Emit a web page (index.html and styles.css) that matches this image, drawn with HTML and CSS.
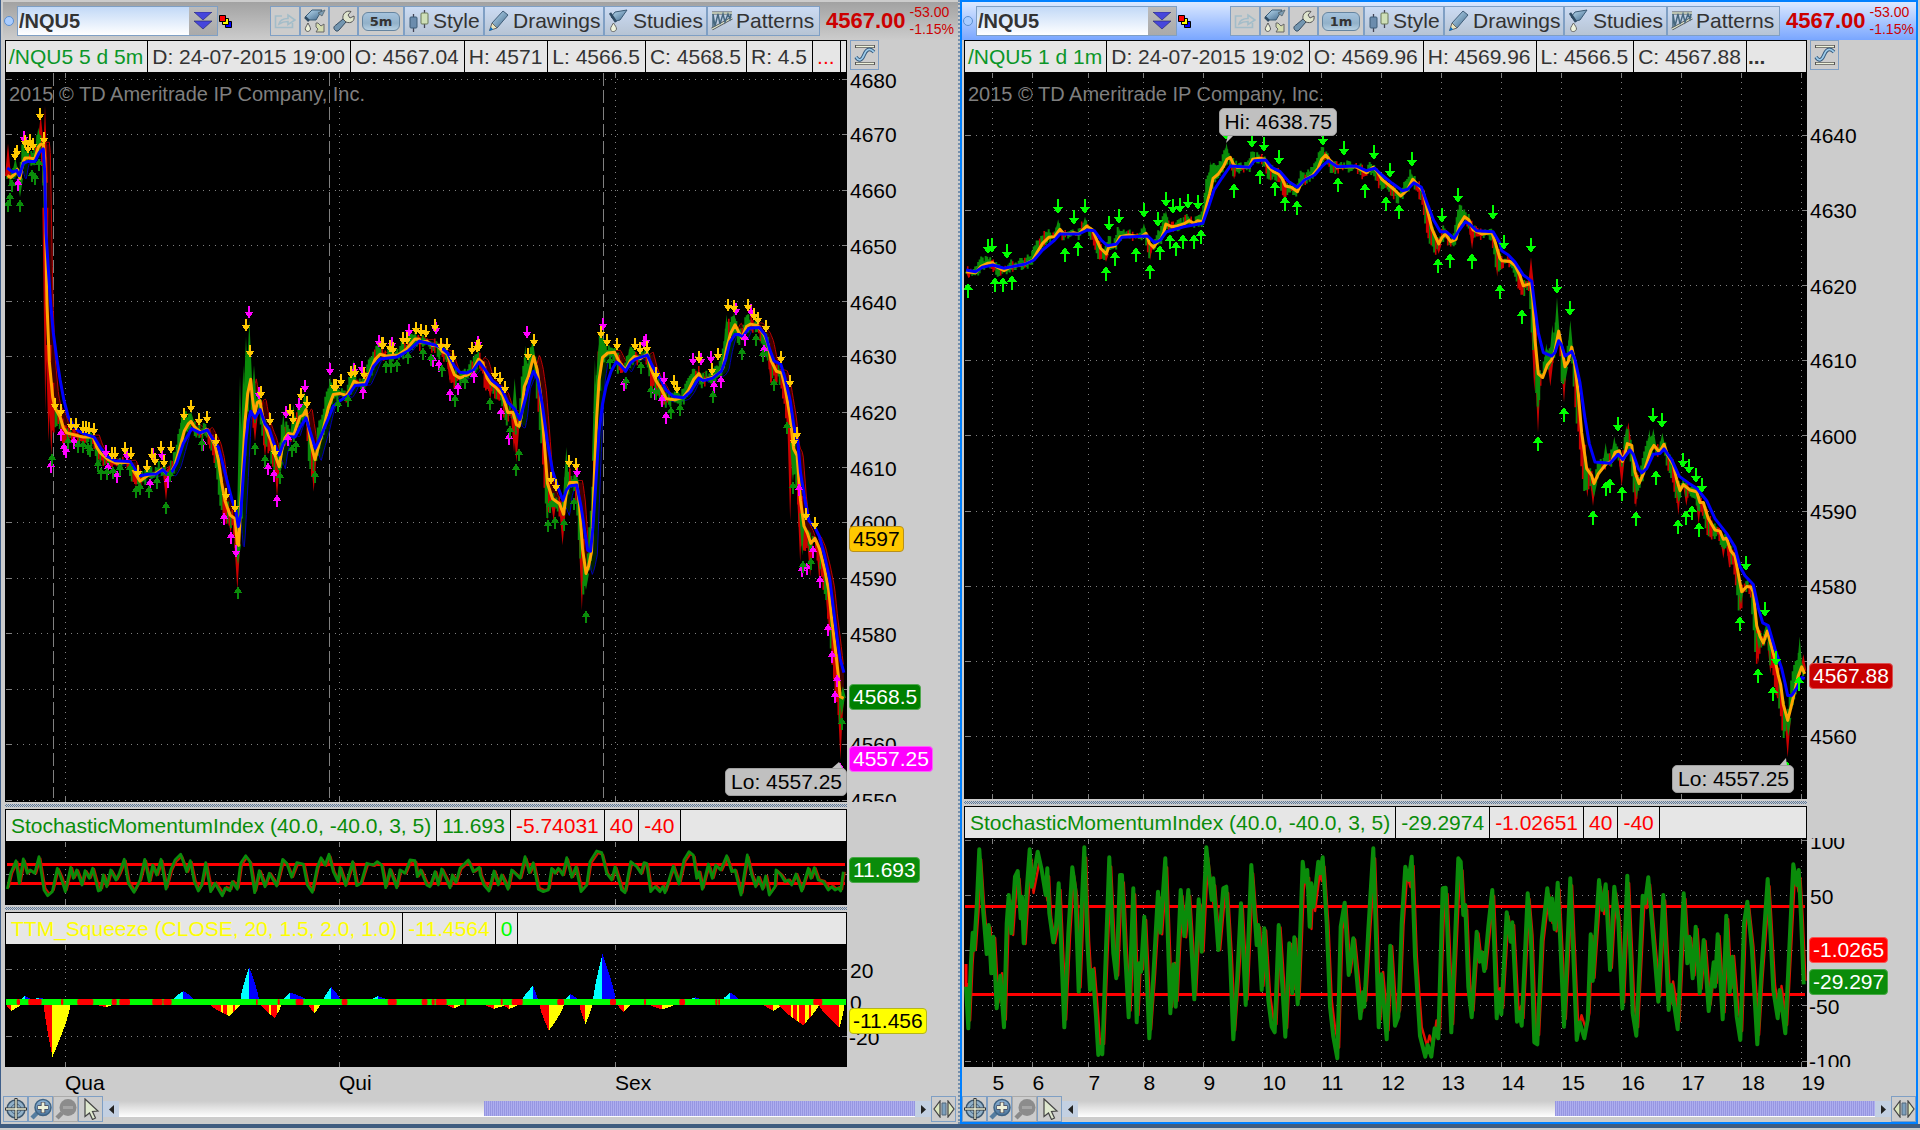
FILE: index.html
```html
<!DOCTYPE html>
<html lang="en">
<head>
<meta charset="utf-8">
<title>/NQU5 charts</title>
<link rel="stylesheet" href="styles.css">
</head>
<body>
<svg class="defs" aria-hidden="true">
  <defs>
    <linearGradient id="steel" x1="0" y1="0" x2="1" y2="1"><stop offset="0" stop-color="#bfe0f5"/><stop offset="1" stop-color="#3f678a"/></linearGradient>
    <linearGradient id="lens" x1="0" y1="0" x2="0" y2="1"><stop offset="0" stop-color="#8fb4d6"/><stop offset="1" stop-color="#4a7399"/></linearGradient>
  </defs>
  <symbol id="i-share" viewBox="0 0 22 16"><path d="M8 3H1.500V14.500H18.500V10M5 11C6 7 9 5.500 14 5.500V2L21 7L14 11.500V8.500C10 8.500 8 9 5 11Z" fill="none" stroke="#a3bdc9" stroke-width="1.600"/></symbol>
  <symbol id="i-reset" viewBox="0 0 22 24"><path d="M1 8L8 1L18 1L12 11L5 11Z" fill="url(#steel)" stroke="#3a5a74"/><path d="M1 8L5 12" stroke="#2f4b63" stroke-width="2.500"/><path d="M14 4L21 1L18 7Z" fill="#7f9db3" stroke="#52656f" stroke-width="0.800"/><path d="M4 14C2 18 .8 19 1.500 21C3 23.500 6 22.500 6.500 20C6.500 18 5 16.500 4 14Z" fill="#eef3dc" stroke="#555"/><path d="M12 14H14L17 17L20 15V23H12L14 20L12 18Z" fill="#d5dcae" stroke="#666"/></symbol>
  <symbol id="i-wrench" viewBox="0 0 22 22"><path d="M2 20C0 18 1 16 3 15L10 9L13 12L6 20C5 21.500 3 21.500 2 20Z" fill="#7396b0" stroke="#334b60"/><path d="M10 9C9 4 13 0 18 1.500L15 5L17 8L21 6C22 11 18 14 13 12Z" fill="#dfe5cd" stroke="#555"/></symbol>
  <symbol id="i-candles" viewBox="0 0 22 22"><path d="M5.500 4V22M16.500 0V18" stroke="#445" stroke-width="1.300"/><rect x="2" y="7" width="7" height="11" rx="1" fill="#6b8cad" stroke="#3f5c78"/><rect x="13" y="3" width="7" height="11" rx="1" fill="#cfe0b8" stroke="#6b7b5a"/></symbol>
  <symbol id="i-pencil" viewBox="0 0 22 22"><path d="M4 13L15 1L20 5L9 18Z" fill="url(#steel)" stroke="#3f5c78"/><path d="M4 13L9 18L1.500 20.500Z" fill="#ece6bd" stroke="#666"/><path d="M1 21L3 17L5 19.500Z" fill="#0870c8"/></symbol>
  <symbol id="i-drop" viewBox="0 0 22 24"><path d="M3 8L7 3L19 1L12 11L8 12Z" fill="url(#steel)" stroke="#3a5a74"/><path d="M2 4L8 13" stroke="#2f4b63" stroke-width="2.600"/><path d="M5.500 14C3 18 2 19 3 21.500C4.500 23.500 8 22.500 8.500 20C8.500 18 7 16.500 5.500 14Z" fill="#eef3dc" stroke="#666"/></symbol>
  <symbol id="i-pattern" viewBox="0 0 22 20"><path d="M1 2H21M1 18L21 7" stroke="#555" stroke-width="3"/><path d="M1 2H21M1 18L21 7" stroke="#dce8d0" stroke-width="1.400"/><path d="M2 3L4 15L7 3L9 13L12 3L14 11L17 3L19 8L20 3M2 3V16" fill="none" stroke="#47687f" stroke-width="1.500"/></symbol>
  <symbol id="i-curve" viewBox="0 0 22 22"><path d="M1 2.500H21M1 19.500H21" stroke="#555" stroke-width="3"/><path d="M2 2.500H20M2 19.500H20" stroke="#eef3dc" stroke-width="1.400"/><path d="M2 13C5 18 8 16 10 11S15 3 20 8" fill="none" stroke="#36597a" stroke-width="3.600"/><path d="M2 13C5 18 8 16 10 11S15 3 20 8" fill="none" stroke="#9ccbea" stroke-width="1.800"/></symbol>
  <symbol id="i-cross" viewBox="0 0 22 22"><circle cx="11" cy="11" r="9" fill="#91b0c8" stroke="#3e5870" stroke-width="1.500"/><circle cx="11" cy="11" r="5" fill="none" stroke="#4c6c88"/><path d="M11 0V22M0 11H22" stroke="#333" stroke-width="3"/><path d="M11 1V21M1 11H21" stroke="#e9eed8" stroke-width="1.400"/></symbol>
  <symbol id="i-plus" viewBox="0 0 22 22"><path d="M2 20L7 15" stroke="#557da0" stroke-width="4.500"/><circle cx="13" cy="9.500" r="8" fill="url(#lens)" stroke="#3e6384" stroke-width="1.500"/><path d="M13 4V15M7.500 9.500H18.500" stroke="#445" stroke-width="4.500"/><path d="M13 4.500V14.500M8 9.500H18" stroke="#edf0d8" stroke-width="2.800"/></symbol>
  <symbol id="i-minus" viewBox="0 0 22 22"><path d="M2 20L7 15" stroke="#8a8a8a" stroke-width="4.500"/><circle cx="13" cy="9.500" r="8.500" fill="#8c8c8c"/><path d="M8 9.500H18" stroke="#a5a5a5" stroke-width="3"/></symbol>
  <symbol id="i-cursor" viewBox="0 0 22 22"><path d="M5 1L18 13L12.500 13.500L15.500 20L12.500 21.500L9.500 15L5 18.500Z" fill="#dfe8cf" stroke="#444" stroke-width="1.200"/></symbol>
  <symbol id="i-expand" viewBox="0 0 22 18"><path d="M7 1V17L1 9Z M15 1V17L21 9Z" fill="#dce8c0" stroke="#444" stroke-width="1.200"/><path d="M9 3V15H13V3Z" fill="#7ea0bd" stroke="#52697d"/></symbol>
  <symbol id="i-down" viewBox="0 0 18 18"><path d="M0 0H18L9 8ZM0 9H18L9 17Z" fill="#4646dc" stroke="#222266" stroke-width="0.600"/></symbol>
  <symbol id="i-link" viewBox="0 0 13 13"><path d="M6.500 6.500H12.500V12.500H6.500Z" fill="#00f" stroke="#000"/><path d="M3.500 3.500H9.500V9.500H3.500Z" fill="#ff0" stroke="#000"/><path d="M.5 .5H6.500V6.500H.5Z" fill="#f00" stroke="#000"/></symbol>
  <symbol id="i-prev" viewBox="0 0 5 9"><path d="M5 0V9L0 4.500Z" fill="#222"/></symbol>
  <symbol id="i-next" viewBox="0 0 5 9"><path d="M0 0V9L5 4.500Z" fill="#222"/></symbol>
</svg>

<main class="workspace">
  <section class="panel panel-left" aria-label="Five minute chart">
    <header class="toolbar">
      <span class="dot"></span>
      <div class="symbol-box">
        <input class="symbol" type="text" value="/NQU5" aria-label="Symbol">
        <button class="symbol-menu" aria-label="Symbol list"><svg width="18" height="18"><use href="#i-down"/></svg></button>
      </div>
      <svg class="link" width="13" height="13"><use href="#i-link"/></svg>
      <div class="tools">
        <button class="tool tool-share" aria-label="Share"><svg width="22" height="16"><use href="#i-share"/></svg></button>
        <button class="tool" aria-label="Reset style"><svg width="22" height="24"><use href="#i-reset"/></svg></button>
        <button class="tool" aria-label="Settings"><svg width="22" height="22"><use href="#i-wrench"/></svg></button>
        <button class="tool tool-time"><span class="pill">5m</span></button>
        <button class="tool tool-text tool-style"><svg width="22" height="22"><use href="#i-candles"/></svg>Style</button>
        <button class="tool tool-text tool-drawings"><svg width="22" height="22"><use href="#i-pencil"/></svg>Drawings</button>
        <button class="tool tool-text tool-studies"><svg width="22" height="24"><use href="#i-drop"/></svg>Studies</button>
        <button class="tool tool-text tool-patterns"><svg width="22" height="20"><use href="#i-pattern"/></svg>Patterns</button>
      </div>
      <div class="quote"><strong>4567.00</strong><div class="change"><span>-53.00</span><span>-1.15%</span></div></div>
    </header>
    <div class="pane-head">
      <div class="cells"><span class="up">/NQU5 5 d 5m</span><span>D: 24-07-2015 19:00</span><span>O: 4567.04</span><span>H: 4571</span><span>L: 4566.5</span><span>C: 4568.5</span><span>R: 4.5</span><span class="red">...</span></div>
      <button class="curve" aria-label="Scale"><svg width="22" height="22"><use href="#i-curve"/></svg></button>
    </div>
    <div class="pane pane-price-left">
      <div class="plot"><svg id="price5" viewBox="0 0 842 730" preserveAspectRatio="none"></svg>
        <p class="credit">2015 © TD Ameritrade IP Company, Inc.</p>
        <span class="callout callout-lo-left">Lo: 4557.25</span>
      </div>
      <div class="axis" id="axis-price5"></div>
    </div>
    <div class="splitter"></div>
    <div class="pane-head">
      <div class="cells study"><span class="green">StochasticMomentumIndex (40.0, -40.0, 3, 5)</span><span class="green">11.693</span><span class="red">-5.74031</span><span class="red">40</span><span class="red">-40</span></div>
    </div>
    <div class="pane pane-smi-left">
      <div class="plot"><svg id="smi5" viewBox="0 0 842 64" preserveAspectRatio="none"></svg></div>
      <div class="axis" id="axis-smi5"></div>
    </div>
    <div class="splitter"></div>
    <div class="pane-head">
      <div class="cells study"><span class="yellow">TTM_Squeeze (CLOSE, 20, 1.5, 2.0, 1.0)</span><span class="yellow">-11.4564</span><span class="lime">0</span></div>
    </div>
    <div class="pane pane-ttm">
      <div class="plot"><svg id="ttm5" viewBox="0 0 842 123" preserveAspectRatio="none"></svg></div>
      <div class="axis" id="axis-ttm5"></div>
    </div>
    <div class="times"><div class="times-scale" id="times5"></div></div>
    <footer class="scrollrow">
      <button class="nav" aria-label="Crosshair"><svg width="22" height="22"><use href="#i-cross"/></svg></button>
      <button class="nav" aria-label="Zoom in"><svg width="22" height="22"><use href="#i-plus"/></svg></button>
      <button class="nav" aria-label="Zoom out" disabled><svg width="22" height="22"><use href="#i-minus"/></svg></button>
      <button class="nav" aria-label="Pointer"><svg width="22" height="22"><use href="#i-cursor"/></svg></button>
      <button class="step" aria-label="Scroll left"><svg width="5" height="9"><use href="#i-prev"/></svg></button>
      <div class="track"><div class="thumb thumb-left"></div></div>
      <button class="step" aria-label="Scroll right"><svg width="5" height="9"><use href="#i-next"/></svg></button>
      <button class="nav" aria-label="Expand"><svg width="22" height="18"><use href="#i-expand"/></svg></button>
    </footer>
  </section>

  <section class="panel panel-right" aria-label="One minute chart">
    <header class="toolbar">
      <span class="dot"></span>
      <div class="symbol-box">
        <input class="symbol" type="text" value="/NQU5" aria-label="Symbol">
        <button class="symbol-menu" aria-label="Symbol list"><svg width="18" height="18"><use href="#i-down"/></svg></button>
      </div>
      <svg class="link" width="13" height="13"><use href="#i-link"/></svg>
      <div class="tools">
        <button class="tool tool-share" aria-label="Share"><svg width="22" height="16"><use href="#i-share"/></svg></button>
        <button class="tool" aria-label="Reset style"><svg width="22" height="24"><use href="#i-reset"/></svg></button>
        <button class="tool" aria-label="Settings"><svg width="22" height="22"><use href="#i-wrench"/></svg></button>
        <button class="tool tool-time"><span class="pill">1m</span></button>
        <button class="tool tool-text tool-style"><svg width="22" height="22"><use href="#i-candles"/></svg>Style</button>
        <button class="tool tool-text tool-drawings"><svg width="22" height="22"><use href="#i-pencil"/></svg>Drawings</button>
        <button class="tool tool-text tool-studies"><svg width="22" height="24"><use href="#i-drop"/></svg>Studies</button>
        <button class="tool tool-text tool-patterns"><svg width="22" height="20"><use href="#i-pattern"/></svg>Patterns</button>
      </div>
      <div class="quote"><strong>4567.00</strong><div class="change"><span>-53.00</span><span>-1.15%</span></div></div>
    </header>
    <div class="pane-head">
      <div class="cells"><span class="up">/NQU5 1 d 1m</span><span>D: 24-07-2015 19:02</span><span>O: 4569.96</span><span>H: 4569.96</span><span>L: 4566.5</span><span>C: 4567.88</span><span class="more">...</span></div>
      <button class="curve" aria-label="Scale"><svg width="22" height="22"><use href="#i-curve"/></svg></button>
    </div>
    <div class="pane pane-price-right">
      <div class="plot"><svg id="price1" viewBox="0 0 843 727" preserveAspectRatio="none"></svg>
        <p class="credit">2015 © TD Ameritrade IP Company, Inc.</p>
        <span class="callout callout-hi">Hi: 4638.75</span>
        <span class="callout callout-lo-right">Lo: 4557.25</span>
      </div>
      <div class="axis" id="axis-price1"></div>
    </div>
    <div class="splitter"></div>
    <div class="pane-head">
      <div class="cells study"><span class="green">StochasticMomentumIndex (40.0, -40.0, 3, 5)</span><span class="green">-29.2974</span><span class="red">-1.02651</span><span class="red">40</span><span class="red">-40</span></div>
    </div>
    <div class="pane pane-smi-right">
      <div class="plot"><svg id="smi1" viewBox="0 0 843 229" preserveAspectRatio="none"></svg></div>
      <div class="axis" id="axis-smi1"></div>
    </div>
    <div class="times"><div class="times-scale" id="times1"></div></div>
    <footer class="scrollrow">
      <button class="nav" aria-label="Crosshair"><svg width="22" height="22"><use href="#i-cross"/></svg></button>
      <button class="nav" aria-label="Zoom in"><svg width="22" height="22"><use href="#i-plus"/></svg></button>
      <button class="nav" aria-label="Zoom out" disabled><svg width="22" height="22"><use href="#i-minus"/></svg></button>
      <button class="nav" aria-label="Pointer"><svg width="22" height="22"><use href="#i-cursor"/></svg></button>
      <button class="step" aria-label="Scroll left"><svg width="5" height="9"><use href="#i-prev"/></svg></button>
      <div class="track"><div class="thumb thumb-right"></div></div>
      <button class="step" aria-label="Scroll right"><svg width="5" height="9"><use href="#i-next"/></svg></button>
      <button class="nav" aria-label="Expand"><svg width="22" height="18"><use href="#i-expand"/></svg></button>
    </footer>
  </section>
</main>
<script src="charts.js"></script>
</body>
</html>
```

FILE: styles.css
```css
* { box-sizing: border-box; }
body {
  margin: 0;
  background: #ccc;
  color: #333;
  font: 21px/24px "Liberation Sans", Arial, sans-serif;
}
button, input { font: inherit; color: inherit; margin: 0; padding: 0; }
svg { display: block; }
.defs { position: absolute; width: 0; height: 0; }

.workspace {
  display: grid;
  grid-template-columns: minmax(0, 1fr) minmax(0, 1fr);
  height: calc(100vh - 2px);
  min-height: 600px;
  border-bottom: 4px solid #3f5c80;
}
.panel { display: flex; flex-direction: column; min-width: 0; background: #ccc; white-space: nowrap; }
.panel-left {
  --axis: 111px; --inset: 4px; --edge: 2px; --tail: 4px;
  border-left: 1px solid #3f5f8a;
  border-right: 2px dotted #7590ad;
  padding: 2px 0;
}
.panel-right {
  --axis: 109px; --inset: 2px; --edge: 0px; --tail: 2px;
  border: 2px solid #0080ff;
  margin-right: 2px;
}

/* toolbar */
.toolbar {
  display: flex;
  align-items: center;
  flex: none;
  height: 38px;
  margin-left: var(--edge);
  padding-left: 1px;
  padding-right: var(--tail);
}
.panel-left .toolbar { background: linear-gradient(#a2a2a2, #ccc); }
.panel-right .toolbar { background: linear-gradient(#dce9ff, #79a6ff); }
.dot { width: 10px; height: 10px; margin-right: 3px; border: 1px solid #5c8fd0; border-radius: 50%; background: #a9ccff; flex: none; }
.symbol-box { display: flex; flex: none; width: 201px; height: 30px; border: 1px solid #7f9fc4; }
.symbol { flex: 1; min-width: 0; border: 0; padding-left: 1px; font-size: 20px; font-weight: bold; background: linear-gradient(#c2d9f7, #fff); }
.symbol-menu { width: 28px; border: 0; background: linear-gradient(#bbb, #aaa); display: flex; align-items: center; justify-content: center; }
.link { margin-left: 1px; flex: none; }
.tools { display: flex; margin-left: auto; flex: none; }
.tool {
  display: flex; align-items: center; justify-content: center;
  width: 29px; height: 30px;
  border: 1px solid #7f9fc4;
  background: #ccc;
}
.tool-share { width: 30px; }
.tool-time { width: 46px; }
.pill {
  width: 38px; height: 19px;
  border: 1px solid #6685a0; border-radius: 6px;
  background: linear-gradient(#a5c3dd, #92b1c9 60%, #b5cfe2);
  font: bold 13px/17px "DejaVu Sans", sans-serif;
}
.tool-text { justify-content: flex-start; gap: 3px; padding-left: 3px; background: linear-gradient(#cbdbf3, #b7c4d4); }
.tool-style { width: 80px; }
.tool-drawings { width: 120px; }
.tool-studies { width: 103px; }
.tool-patterns { width: 113px; }
.quote { display: flex; align-items: center; flex: none; width: 134px; padding-left: 6px; gap: 4px; color: #c00; }
.quote strong { font-size: 22px; }
.change { display: flex; flex-direction: column; font-size: 14px; line-height: 17px; }

/* value strips above the plots */
.pane-head { display: grid; grid-template-columns: minmax(0, 1fr) var(--axis); flex: none; height: 32px; padding-left: var(--inset); }
.cells { display: flex; overflow: hidden; border: 1px solid #000; border-bottom: 0; background: #e6e6e6; line-height: 31px; }
.cells span { flex: none; padding: 0 5px 0 4px; border-right: 1px solid #000; }
.cells.study span { padding: 0 5px; }
.cells .up { padding: 0 4px 0 3px; color: #0a9628; }
.cells .more { border: 0; padding: 0 1px; font-weight: bold; }
.green { color: #0a8c0a; }
.red { color: #f00; }
.yellow { color: #ff0; }
.lime { color: #0f0; }
.curve { width: 29px; height: 30px; margin-left: 3px; border: 1px solid #7f9fc4; background: #ccc; display: flex; align-items: center; justify-content: center; }

/* plots and their scales */
.pane { display: grid; grid-template-columns: minmax(0, 1fr) var(--axis); grid-template-rows: minmax(0, 1fr); padding-left: var(--inset); min-height: 0; }
.pane-price-left { flex: 730 1 0; }
.pane-smi-left { flex: 64 1 0; }
.pane-ttm { flex: 123 1 0; }
.pane-price-right { flex: 727 1 0; }
.pane-smi-right { flex: 229 1 0; }
.plot { position: relative; background: #000; min-height: 0; }
.plot svg { width: 100%; height: 100%; overflow: hidden; }
.axis { position: relative; overflow: hidden; color: #000; }
.axis span { position: absolute; left: 3px; transform: translateY(-50%); margin-top: 1px; }
.axis .minus { left: 2px; }
.axis .tag { left: 2px; height: 26px; padding: 0 3px; margin-top: 0; border: 1px solid #000; border-radius: 4px; }
.axis .tag-gold { background: #ffc800; border-color: #b8901c; }
.axis .tag-green { background: #008000; border-color: #50a850; color: #fff; }
.axis .tag-leaf { background: #0a8c0a; border-color: #46a846; color: #fff; }
.axis .tag-pink { background: #f0f; border-color: #ff5cff; color: #fff; }
.axis .tag-yellow { background: #ff0; border-color: #b4b41e; }
.axis .tag-red { background: #c80000; border-color: #dc5050; color: #fff; }
.axis .tag-bright { background: #f00; border-color: #ff5050; color: #fff; }
.credit { position: absolute; left: 4px; top: 10px; margin: 0; font-size: 20px; color: #7f7f7f; }
.callout { position: absolute; height: 28px; padding: 1px 4px 1px 5px; border: 1px solid #a0a0a0; border-radius: 5px; background: #c0c0c0; color: #000; }
.callout-lo-left { right: 0; bottom: 6px; }
.callout-lo-right { right: 13px; bottom: 6px; }
.callout-hi { left: 30.2%; top: 36px; }
.splitter {
  flex: none; height: 3px;
  margin: 2px var(--axis) 2px var(--inset);
  background: repeating-conic-gradient(#5a789b 0 25%, #ccc 0 50%) 0 0 / 2px 2px;
}
.times { flex: none; height: 29px; padding-left: var(--inset); padding-right: var(--axis); color: #000; }
.times-scale { position: relative; height: 100%; }
.times span { position: absolute; top: 4px; }

/* scrolling row */
.scrollrow { display: flex; align-items: center; flex: none; height: 26px; margin-left: var(--edge); }
.panel-left .scrollrow { margin-right: 2px; }
.nav { flex: none; width: 25px; height: 26px; border: 1px solid #7f9fc4; background: #ccc; display: flex; align-items: center; justify-content: center; }
.nav:disabled { border-color: #aaa; }
.step { flex: none; width: 16px; height: 16px; border: 0; background: #c3d0e2; display: flex; align-items: center; justify-content: center; }
.track { flex: 1; height: 16px; background: linear-gradient(#ccc, #fff); }
.thumb { height: 15px; margin-left: auto; background: repeating-linear-gradient(90deg, #9696e1 0 1px, #aeaeef 1px 2px); }
.thumb-left { width: 54.2%; }
.thumb-right { width: 40.1%; }
```

FILE: charts.js
```js
// Samples are stored on fine integer grids; each grid has its own origin and scale in plot units.
const grid = (x0, y0, kx, ky) => pts => {
  const out = [];
  for (let i = 0; i < pts.length; i += 2) out.push([x0 + pts[i] / kx, y0 + pts[i + 1] / ky]);
  return out;
};
const L1 = grid(-5, 18, 3, 2.8), L2 = grid(415, 208, 2.904, 2.904);
const R1 = grid(-4, 28, 2.904, 3), R2 = grid(496, 168, 3, 2.8);

const line = (pts, color, w) =>
  `<path d="M${pts.map(p => p[0].toFixed(1) + ' ' + p[1].toFixed(1)).join('L')}" fill="none" stroke="${color}" stroke-width="${w}" stroke-linejoin="round"/>`;
const at = (s, x) => {
  if (x <= s[0][0]) return s[0][1];
  for (let i = 1; i < s.length; i++) if (x <= s[i][0]) {
    const [a, b] = [s[i - 1], s[i]];
    return a[1] + (b[1] - a[1]) * (x - a[0]) / (b[0] - a[0] || 1);
  }
  return s[s.length - 1][1];
};
const noise = i => { const v = Math.sin(i * 12.9898) * 43758.5453; return v - Math.floor(v); };

function rules(w, h, xs, ys, dashed = []) {
  let d = '', t = '', k = '';
  ys.forEach(y => { d += `M6 ${y}H${w - 6}`; t += `M1 ${y}h5M${w - 5} ${y}h5`; });
  xs.forEach(x => { d += `M${x} 10V${h - 5}`; t += `M${x} 1v5M${x} ${h}v-5`; });
  dashed.forEach(x => { k += `M${x} 1V${h - 4}`; });
  return `<g fill="none" stroke="#808080" shape-rendering="crispEdges"><path d="${d}" stroke-dasharray="1 5"/><path d="${t}"/><path d="${k}" stroke-dasharray="13 4"/></g>`;
}

function bars(fast, lead, spread) {
  let g = '', r = '';
  const end = fast[fast.length - 1][0];
  for (let x = fast[0][0], i = 0; x < end; x += 1.5, i++) {
    const o = at(fast, x), move = at(fast, x + 3) - at(fast, x - 3);
    const p = o + Math.max(-38, Math.min(38, move * lead));
    const seg = `M${x.toFixed(1)} ${(Math.min(o, p) - noise(i) * spread).toFixed(1)}V${(Math.max(o, p) + noise(i + 900) * spread).toFixed(1)}`;
    if (move > 0.3 && noise(i + 400) > 0.5 || noise(i + 70) > 0.92) r += seg; else g += seg;
  }
  return `<path d="${g}" stroke="#0a8c0a" stroke-width="2"/><path d="${r}" stroke="#cc0000" stroke-width="1.6"/>`;
}
const spikes = (pts, fast, color) =>
  `<path d="${pts.map(([x, y]) => { const o = at(fast, x); return `M${x - 3} ${o}L${x} ${y}L${x + 3} ${o}Z`; }).join('')}" fill="${color}"/>`;

// The lagging channel: dark fill between the fast line and its delayed copy.
function channel(fast, lag) {
  let up = '', down = '';
  const end = fast[fast.length - 1][0], top = [], low = [];
  for (let x = fast[0][0] + lag; x < end; x += 1) {
    const o = at(fast, x), s = at(fast, x - lag);
    if (s < o) down += `M${x.toFixed(1)} ${s.toFixed(1)}V${o.toFixed(1)}`; else up += `M${x.toFixed(1)} ${o.toFixed(1)}V${s.toFixed(1)}`;
    top.push([x, Math.min(s, o) - 2]); low.push([x, Math.max(s, o) + 2]);
  }
  return `<path d="${up}" stroke="#002200" stroke-width="1.2"/><path d="${down}" stroke="#400000" stroke-width="1.2"/>` + line(top, '#c00000', 1) + line(low, '#0000b4', 1);
}

const arrows = (pts, dir, color, half, head, len) =>
  `<path shape-rendering="crispEdges" d="${pts.map(([x, y]) => `M${Math.round(x)} ${Math.round(y)}l${-half} ${-head * dir}h${half - 1}v${-(len - head) * dir}h2v${(len - head) * dir}h${half - 1}Z`).join('')}" fill="${color}"/>`;

const put = (id, html) => { document.getElementById(id).innerHTML = html; };
const scale = (id, h, labels, tags = []) => put(id,
  labels.map(([t, y]) => `<span class="${t[0] === '-' ? 'minus' : ''}" style="top:${(y / h * 100).toFixed(2)}%">${t}</span>`).join('') +
  tags.map(([t, y, c]) => `<span class="tag tag-${c}" style="top:${(y / h * 100).toFixed(2)}%">${t}</span>`).join(''));
const times = (id, w, labels) => put(id, labels.map(([t, x]) => `<span style="left:${(x / w * 100).toFixed(2)}%">${t}</span>`).join(''));

// Five minute price
const fast5 = [
  ...L1([22,240,32,245,45,235,52,222,60,248,68,205,75,190,88,190,98,192,105,190,115,160,122,152,130,152,134,190,137,400,141,600,148,760,158,860,165,890,180,915,190,945,200,960,225,966,250,972,280,972,290,1000,300,1015,325,1035,350,1045,390,1042,400,1065,420,1095,445,1078,465,1075,485,1062,498,1072,510,1075,525,1050,540,1000,553,955,565,935,573,928,585,945,605,960,620,950,632,972,645,995,655,1035,665,1100,675,1150,690,1190,705,1200,712,1270,716,1275,720,1200,727,1080,735,930,743,850,752,810,757,860,764,908,772,875,780,870,790,925,805,965,812,980,820,1010,830,1035,838,1055,845,1010,855,975,865,962,882,965,890,940,900,915,910,910,918,895,925,940,935,1000,945,1035,955,1000,970,950,985,890,1000,853,1020,850,1040,855,1050,840,1062,815,1075,822,1095,820,1110,790,1125,755,1140,740,1160,745,1195,742,1220,725,1245,697,1258,698]),
  ...L2([0,180,20,178,35,190,50,190,65,208,80,215,90,250,100,275,115,285,140,275,155,260,170,230,182,240,195,285,205,300,220,312,240,335,255,385,270,385,280,420,288,425,295,390,303,310,315,280,325,240,330,222,340,260,350,330,360,460,370,590,385,635,405,650,417,680,425,620,435,588,455,588,463,650,472,780,482,852,490,830,498,790,505,600,513,400,520,290,530,225,545,212,565,210,580,240,597,262,610,235,622,222,640,228,660,215,672,262,685,292,700,315,715,345,740,348,765,340,780,320,795,288,810,272,820,292,850,282,870,270,880,255,890,200,902,155,915,130,925,150,935,168,948,135,960,128,980,132,1000,160,1010,185,1020,235,1035,265,1050,270,1060,310,1075,400,1085,490,1095,510,1105,640,1115,715,1125,735,1135,765,1147,750,1160,780,1175,840,1187,900,1195,980,1205,1060,1215,1150,1220,1210,1230,1215])];
const slow5 = [
  ...L1([22,218,38,230,50,225,58,240,70,205,85,200,105,200,118,175,130,165,134,230,138,400,145,500,152,600,160,680,170,750,180,810,192,870,205,915,220,940,235,955,260,965,282,972,300,1000,320,1025,345,1038,390,1040,405,1062,420,1080,445,1076,470,1075,488,1063,500,1074,515,1070,530,1045,550,990,575,948,600,960,622,952,640,980,655,1000,665,1035,680,1090,695,1145,708,1180,715,1222,722,1190,730,1080,738,980,745,925,752,900,765,918,780,895,795,935,808,950,820,985,838,1022,850,990,865,970,885,972,900,945,918,918,930,955,946,1003,960,975,985,920,1000,885,1020,870,1045,855,1065,827,1098,825,1120,775,1140,753,1190,748,1225,730,1258,703]),
  ...L2([0,178,40,188,60,195,80,212,100,250,115,268,135,270,155,262,172,238,190,262,210,292,235,312,255,355,275,375,290,405,305,350,320,290,330,265,342,290,355,360,370,470,385,555,400,600,415,640,425,610,435,598,455,595,468,660,480,740,487,785,495,788,502,720,510,600,520,440,530,360,540,310,555,265,570,238,580,245,597,265,612,240,625,230,660,218,675,250,700,290,715,320,735,338,765,342,785,325,810,285,822,292,850,285,875,265,888,230,900,180,915,158,925,158,937,165,955,140,985,138,1003,160,1015,200,1028,235,1048,245,1060,285,1075,350,1085,420,1097,470,1105,560,1118,640,1130,700,1145,715,1160,745,1175,800,1190,870,1200,950,1210,1030,1220,1100,1231,1140])];
const redSpike5 = [...L1([24,150,122,70,135,45,136,905,146,985,154,1025,498,1150,712,1400,831,1140,941,1125,765,985,795,1030,672,1190,692,1240,408,1110]), ...L2([273,500,280,530,87,300,370,700,388,700,414,770,470,960,1075,700,1104,820,1133,860,1160,880,1185,1000,1208,1210,1221,1395,1223,1320,204,345,1020,310])];
const greenSpike5 = [...L1([46,190,60,300,115,105,128,145,720,800,730,770,738,690,748,645,762,770,545,910,573,900,850,905,880,880,903,875,914,845,990,800,1060,755,840,1075,714,1330,1136,715]), ...L2([275,285,306,190,327,170,425,485,452,555,482,900,508,230,518,185,530,165,610,190,655,195,793,255,890,100,912,95,952,100,1083,590,1110,800,1228,1180,1225,1265])];
const price5Ys = []; for (let v = 0; v < 14; v++) price5Ys.push(Math.round(7 + v * 55.43) + 0.5);
put('price5', rules(842, 730, [60.5, 334.5, 610.5], price5Ys, [48.5, 324.5, 598.5]) +
  channel(fast5, 6) + spikes(redSpike5, fast5, '#cc0000') + bars(fast5, 0.7, 8) + spikes(greenSpike5, fast5, '#0a8c0a') +
  line(fast5, '#ffa500', 3) + line(slow5, '#0000ff', 3) +
  arrows([...L1([72,150,318,1030,380,1040,487,1040,460,1040,747,642,778,868,858,922,897,900,914,848,990,802,1062,800,1086,795,1136,722,1176,728,1227,692,709,1310]), ...L2([47,160,168,200,311,172,457,575,530,148,656,195,650,200,708,305,793,250,816,250,845,245,917,105,962,108])], 1, '#ff00ff', 4, 7, 13) +
  arrows([...L1([55,245,152,1035,183,945,192,985,197,995,222,968,324,1042,352,1065,450,1085,503,1078,608,975,672,1182,692,1235,804,1042,822,1060,831,1132,865,960,1089,828]), ...L2([38,215,54,230,87,315,110,295,158,260,235,370,258,440,592,285,682,310,702,330,714,380,853,290,873,275,944,155,998,185,1100,590,1108,825,1124,820,1142,770,1161,858,1184,995,1195,1075,1205,1190,1210,1145,1219,1400])], -1, '#ff00ff', 4, 7, 13) +
  arrows([...L1([24,305,30,285,60,305,36,248,97,220,104,230,116,190,155,1015,204,970,235,980,250,980,264,985,270,992,295,1032,303,1055,321,1055,339,1052,360,1045,390,1045,408,1105,420,1098,447,1105,471,1082,498,1150,510,1060,605,975,714,1390,765,985,795,1018,840,1068,877,990,888,980,945,1065,1015,865,1044,850,1158,755,1173,755,1190,752,1224,730]), ...L2([9,195,32,212,63,245,102,330,130,280,203,340,260,420,279,530,287,488,372,693,378,640,393,685,418,690,447,630,482,958,552,222,597,280,642,235,671,305,685,310,728,365,755,358,850,318,935,195,977,155,995,200,1027,285,1065,410,1083,585,1112,812,1135,805,1225,1270])], -1, '#0a8c0a', 4, 7, 13) +
  arrows([...L1([120,88,132,155,44,200,50,190,75,162,90,160,83,180,98,172,165,898,183,915,212,955,228,955,248,962,258,962,268,965,282,968,337,1035,345,1035,375,1022,393,1035,414,1085,441,1072,457,1040,465,1052,483,1020,492,1058,513,1020,553,928,573,905,597,942,620,935,648,1000,677,1150,704,1185,738,678,750,750,783,865,810,942,824,1030,871,915,879,938,903,872,922,892,1003,845,1008,845,1023,832,1053,808,1065,805,1091,812,1145,728,1148,728,1170,735,1180,742,1209,715,1220,715,1248,685]), ...L2([3,165,17,168,43,152,78,205,60,205,97,240,150,218,165,212,171,210,218,290,232,305,247,330,313,235,331,195,381,595,396,615,432,545,453,555,525,172,543,195,572,207,624,205,639,218,660,215,686,290,738,315,747,330,810,245,848,278,866,235,894,92,911,95,952,92,970,118,982,132,1005,155,1048,245,1075,315,1087,485,1095,465,1121,700,1147,725])], 1, '#ffc800', 4, 7, 13) +
  '<path d="M834 690L826 697H838Z" fill="#c0c0c0"/>');
scale('axis-price5', 730, price5Ys.map((y, i) => [String(4680 - i * 10), y]), [['4597', 467, 'gold'], ['4568.5', 625, 'green'], ['4557.25', 687, 'pink']]);

// One minute price
const fast1 = [
  ...R1([18,515,45,518,60,500,80,490,95,488,105,500,128,512,145,502,190,492,212,480,225,455,240,430,258,412,275,410,290,388,300,400,315,402,330,398,345,402,358,388,368,378,385,390,395,415,408,445,425,462,432,440,450,438,465,410,490,405,525,410,540,400,550,430,562,442,570,430,585,415,592,395,598,372,615,380,630,378,650,372,665,362,680,370,690,362,705,365,715,320,725,280,735,235,750,222,765,200,775,178,785,172,795,195,805,202,840,202,850,178,870,175,885,178,895,200,910,215,925,222,935,235,945,258,962,262,980,275,990,252,1000,240,1025,225,1040,205,1050,178,1062,165,1075,182,1095,202,1120,200,1150,200,1180,218,1200,202,1212,215,1225,238,1245,255,1262,270,1280,288,1300,268,1315,238,1330,255,1345,275,1355,320,1370,385,1390,432,1400,412,1410,402,1425,425,1440,418,1450,375,1465,350,1478,360,1490,390,1515,402,1545,398,1555,430,1568,475]),
  ...R2([125,58,150,60,165,72,180,100,190,128,212,122,218,165,225,280,235,375,248,385,262,350,275,335,285,310,296,255,305,300,315,355,325,340,335,300,342,330,355,430,365,540,380,640,395,660,402,682,415,655,440,625,455,620,465,595,478,590,487,620,495,600,502,570,515,575,525,650,537,682,550,655,562,620,572,590,582,575,595,590,602,588,612,572,622,600,640,630,650,670,660,702,670,685,690,700,710,705,720,735,730,735,745,780,765,812,780,815,790,838,800,835,812,870,825,885,835,935,845,985,860,970,872,972,880,985,890,1080,900,1110,910,1128,922,1095,932,1130,945,1175,955,1220,962,1245,970,1300,983,1345,995,1300,1005,1260,1015,1220,1025,1195,1034,1215])];
const slow1 = [
  ...R1([18,510,45,515,65,502,95,495,128,505,190,492,215,480,240,450,275,420,290,402,345,402,370,390,390,392,410,420,428,437,455,432,470,412,545,408,565,428,582,420,600,395,650,380,705,370,722,320,738,270,760,235,785,198,840,202,855,182,888,180,905,202,930,215,955,245,980,262,1000,240,1030,225,1050,200,1070,182,1095,200,1150,198,1180,212,1205,205,1225,225,1255,250,1285,272,1300,268,1318,248,1340,262,1355,305,1375,360,1395,395,1412,395,1435,415,1450,390,1468,365,1480,372,1500,392,1548,395,1568,430]),
  ...R2([125,30,145,42,165,62,190,98,215,115,225,190,235,260,250,315,275,325,285,315,296,282,305,295,315,325,335,312,345,335,360,400,375,500,388,570,405,622,450,625,475,600,488,615,510,588,520,600,535,640,545,652,560,640,580,600,600,598,612,585,635,615,658,662,685,680,710,695,740,730,765,780,800,822,825,860,840,915,855,940,880,965,895,1030,908,1072,925,1080,945,1145,965,1200,975,1240,983,1275,995,1275,1010,1255,1025,1225,1034,1228])];
const hours = [28.5, 68.5, 124.5, 179.5, 239.5, 298.5, 357.5, 417.5, 477.5, 537.5, 597.5, 657.5, 717.5, 777.5, 837.5];
const price1Ys = []; for (let v = 0; v < 9; v++) price1Ys.push(Math.round(63 + v * 75.1) + 0.5);
put('price1', rules(843, 727, hours, price1Ys) +
  spikes([...R1([424,485,552,480,796,238,1390,462,1487,448,25,535,1560,530]), ...R2([213,48,223,425,234,540,271,410,312,455,370,670,382,720,399,745,485,690,505,510,528,750,655,770,679,745,716,795,748,830,790,892,808,920,841,1040,895,1185,931,1215,950,1280,983,1448,1030,1160])], fast1, '#cc0000') +
  bars(fast1, 0.9, 6) +
  spikes([...R1([728,183,735,190,774,128,598,332,285,358,363,350,462,385,534,370,848,155,1053,150,1312,220,1446,325,1450,335]), ...R2([259,290,277,238,291,160,331,225,234,480,315,400,437,568,463,550,499,520,402,720,530,725,568,530,580,528,607,540,656,735,843,1020,897,1150,920,1072,985,1390,1002,1205,1019,1110])], fast1, '#0a8c0a') +
  line(fast1, '#ffa500', 3) + line(slow1, '#0000ff', 3) +
  arrows([...R1([81,462,93,458,137,478,285,342,331,375,363,342,433,393,462,372,534,355,575,382,598,320,620,342,638,338,662,327,690,330,772,120,848,145,883,157,926,195,1053,138,1115,168,1202,180,1248,235,1312,200,1400,368,1446,308,1547,360]), ...R2([132,27,213,35,291,150,330,213,474,538,579,513,606,525,669,638,687,655,708,680,726,708,858,928,915,1055,948,1192])], 1, '#00ff00', 5, 7, 15) +
  arrows([...R1([23,548,102,530,125,530,151,525,305,440,343,423,424,498,450,453,511,440,552,492,581,435,610,402,627,422,647,403,680,402,700,388,796,248,870,208,914,242,944,288,979,300,1098,230,1176,248,1237,288,1275,312,1387,473,1423,460,1487,460]), ...R2([36,38,120,122,186,192,234,550,312,467,399,755,437,675,450,665,486,690,528,760,588,645,654,780,678,755,696,742,717,790,840,1053,894,1197,939,1250,1017,1222,981,1460])], -1, '#00ff00', 5, 7, 15) +
  '<path d="M822 686L815 694H823Z" fill="#c0c0c0"/><path d="M262 71L264 63H270Z" fill="#c0c0c0"/>');
scale('axis-price1', 727, price1Ys.map((y, i) => [String(4640 - i * 10), y]), [['4567.88', 604, 'red']]);

// Stochastic momentum, five minute
const smi5 = [
  ...grid(-5, -51, 3, 3)([22,297,32,250,48,212,58,280,70,207,82,250,90,240,104,250,117,200,132,300,143,317,157,305,172,235,182,260,196,305,212,232,220,265,230,240,246,285,255,242,268,265,278,235,295,303,302,300,310,255,320,290,332,240,348,270,358,250,373,208,385,280,402,307,420,270,434,208,448,275,458,225,470,255,483,208,498,297,512,240,525,210,542,193,560,245,571,212,583,275,595,303,605,285,617,218,632,305,645,280,667,317,675,295,690,302,697,275,712,298,722,220,737,197,750,215,764,308,778,242,795,290,808,250,830,288,848,208,860,220,875,262,890,218,910,222,922,285,937,307,952,230,963,203,975,225,987,193,1000,245,1014,275,1020,232,1037,287,1058,215,1070,287,1083,280,1100,220,1120,225,1132,215,1145,225,1157,293,1170,238,1190,293,1200,240,1215,250,1230,210,1245,212,1252,260,1262,240,1280,285,1290,290,1305,245,1315,285,1325,237,1338,265,1350,293,1357,255,1368,277,1380,235,1405,210,1420,245,1438,232]),
  ...grid(475, -51, 3, 3)([1,255,12,285,27,303,42,243,55,285,65,255,84,298,95,240,120,265,135,200,148,248,160,218,175,298,190,305,205,300,215,235,225,250,235,235,248,255,260,203,275,262,288,230,303,305,320,285,330,215,350,183,365,188,380,250,395,270,405,230,425,300,435,308,452,215,470,230,483,250,492,218,500,220,512,305,525,290,540,305,548,290,555,308,570,260,580,228,597,282,612,210,627,185,640,195,650,265,657,245,667,298,685,222,697,265,707,225,722,240,740,197,755,245,765,240,783,315,802,195,815,255,827,290,835,262,848,298,857,258,868,315,885,290,888,240,903,255,915,275,925,270,935,285,948,252,965,303,985,235,993,265,1003,233,1015,270,1030,275,1045,300,1055,290,1065,300,1075,295,1082,303,1090,245])];
const delayed = (s, dx, cy, damp) => s.map(([x, y]) => [x + dx, cy + (y - cy) * damp]);
put('smi5', rules(842, 64, [60.5, 334.5, 610.5], [33.5]) +
  '<path d="M2 23.500H840M2 42.500H840" stroke="#f00" stroke-width="3"/>' +
  line(delayed(smi5, 1.5, 33, 0.9), '#c01800', 2) + line(smi5, '#0a8c0a', 2.8));
scale('axis-smi5', 64, [], [['11.693', 29, 'leaf']]);

// Stochastic momentum, one minute
const smi1 = [
  ...grid(-14, -48, 3, 3)([48,590,55,715,62,530,68,428,72,480,80,350,88,178,97,330,110,492,116,405,124,550,130,440,140,655,151,557,162,712,170,400,176,315,184,430,195,260,203,243,212,385,216,320,221,460,230,300,239,178,245,290,263,185,275,240,287,315,292,235,298,370,310,457,318,410,326,280,343,712,355,430,367,232,376,300,386,605,395,350,403,172,412,450,420,600,428,540,438,680,445,795,452,770,457,793,467,500,478,202,490,490,499,565,510,255,516,255,525,480,536,682,550,295,560,697,567,520,573,545,583,380,598,745,610,560,624,305,631,428,646,205,661,670,670,523,677,650,692,300,703,438,715,300,733,628,746,328,755,485,769,172,785,330,790,265,805,480,820,295,829,290,840,500,850,748,862,560,873,340,887,645,895,450,904,225,920,465,925,405,935,600,943,415,955,630,965,710,974,727,986,405,1006,740,1018,460,1027,610,1033,442,1043,643,1058,215,1066,275,1072,240,1079,410,1084,280,1090,350,1105,215,1110,250,1118,202,1130,400,1140,650,1150,740,1162,805,1172,410,1184,338,1196,555,1210,445,1220,560,1231,685,1238,607,1243,650,1255,420,1270,175,1286,712,1294,553,1310,748,1321,467,1335,707,1345,680,1355,400,1366,230,1376,270,1385,200,1395,500,1410,738,1426,800,1433,765]),
  ...grid(466, -48, 3, 3)([4,800,14,715,25,745,38,295,47,293,64,727,75,450,85,205,92,215,100,375,106,345,115,590,125,682,140,425,149,515,155,487,163,543,175,410,187,300,200,685,205,607,214,673,230,367,242,455,247,397,261,695,268,667,275,707,293,310,302,430,313,757,322,763,335,450,352,295,362,390,366,325,374,418,383,278,402,710,421,265,440,750,449,697,463,745,473,690,482,433,488,573,507,270,517,360,527,283,540,540,553,290,565,390,577,655,592,257,608,670,619,737,638,317,645,340,655,262,685,635,700,315,716,660,724,585,743,718,761,310,772,520,778,440,788,565,797,410,809,610,821,450,836,663,851,517,855,590,863,433,878,688,889,377,899,607,907,500,920,680,931,750,942,400,952,335,965,470,982,763,992,575,1013,267,1030,600,1043,685,1049,600,1066,730,1090,223,1100,285,1106,240,1113,380,1121,583])];
put('smi1', rules(843, 229, hours, [2.5, 57.5, 112.5, 167.5, 223.5]) +
  '<path d="M1 68.500H841M1 156.500H841" stroke="#f00" stroke-width="3"/><path d="M2 126V150" stroke="#f00" stroke-width="3"/>' +
  line(delayed(smi1, 1.8, 112, 0.9), '#e01000', 2.4) + line(smi1, '#0a8c0a', 4));
scale('axis-smi1', 229, [['100', 3], ['50', 58], ['-50', 168], ['-100', 223]], [['-1.0265', 112, 'bright'], ['-29.297', 144, 'leaf']]);

// Squeeze histogram: start, peak, end, peak height
const hump = (x0, list) => list.map(([a, p, b, y]) => [x0 + a / 3, x0 + p / 3, x0 + b / 3, y / 3 - 154]);
const humps = [
  ...hump(-5, [[62,74,90,618],[105,115,130,622],[520,548,580,603],[720,746,775,531],[850,870,915,608],[970,992,1018,591],[1115,1132,1155,618],[18,32,60,662],[130,156,210,800],[290,318,335,651],[630,685,718,678],[782,823,842,684],[925,942,958,670],[1340,1360,1380,655]]),
  ...hump(475, [[126,157,172,588],[255,270,290,612],[338,366,405,492],[630,645,658,622],[728,750,775,608],[15,40,75,656],[70,85,110,657],[177,205,250,722],[297,315,335,702],[412,430,448,666],[510,545,580,658],[850,878,905,662],[895,968,1015,705],[1015,1077,1092,712]])];
let histogram = '';
humps.forEach(([a, p, b, y], n) => {
  const base = y < 58 ? 55 : 61;
  const striped = n === 10 || n === 11 || n === 26;
  for (let x = Math.round(a); x < b; x += 1) {
    const t = x < p ? (x - a) / (p - a) : (b - x) / (b - p);
    const tip = base + (y - base) * Math.pow(Math.max(t, 0), 0.8);
    const flip = striped && t > 0.4 && Math.floor(x / 2) % 3 === 0;
    const color = y < 58 ? (x < p ? '#00ffff' : '#0000ff') : ((x < p) !== flip ? '#ff0000' : '#ffff00');
    histogram += `<rect x="${x}" y="${Math.min(58, tip).toFixed(1)}" width="1" height="${Math.abs(tip - 58).toFixed(1)}" fill="${color}"/>`;
  }
});
const fired = [[50,60],[85,125],[183,190],[232,280],[335,350],[358,390],[457,488],[490,515],[768,773],[833,839],[887,910],[1025,1042],[1163,1190],[1265,1282],[1295,1304],[1307,1340],[1393,1399],[1502,1508],[1535,1568],[1672,1692],[1830,1848],[1932,1938],[2038,2055],[2146,2152],[2155,2160],[2440,2467]];
put('ttm5', rules(842, 123, [60.5, 334.5, 610.5], [25.5, 92.5]) +
  `<g shape-rendering="crispEdges">${histogram}</g>` +
  '<path d="M1 58H841" stroke="#0f0" stroke-width="6"/>' +
  fired.map(([a, b]) => `<rect x="${(a / 3 - 5).toFixed(1)}" y="55" width="${((b - a) / 3).toFixed(1)}" height="6" rx="1.5" fill="#f00"/>`).join(''));
scale('axis-ttm5', 123, [['20', 26], ['0', 58], ['-20', 93]], [['-11.456', 77, 'yellow']]);

times('times5', 842, [['Qua', 60], ['Qui', 334], ['Sex', 610]]);
times('times1', 843, hours.map((x, i) => [String(i + 5), x]));
```
